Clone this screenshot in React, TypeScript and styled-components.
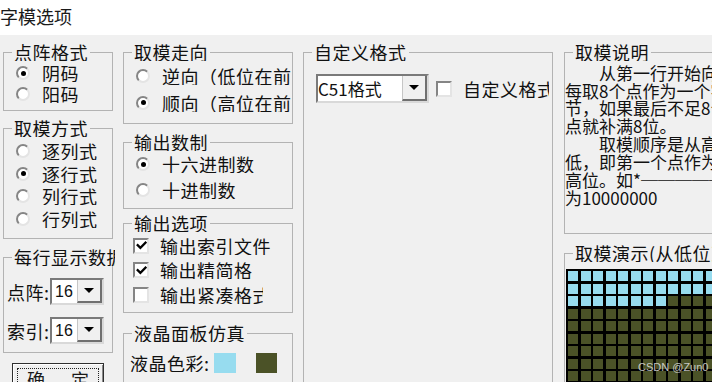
import React from "react";
import styled, { createGlobalStyle } from "styled-components";

const CJK = `"Noto Sans CJK SC", "Noto Sans", sans-serif`;
const LATIN = `"Liberation Sans", Arial, sans-serif`;

const GlobalStyle = createGlobalStyle`
  html, body { margin: 0; padding: 0; background: #ffffff; overflow: hidden; }
  body { font-family: ${CJK}; color: #111111; }
`;

const Window = styled.div`
  position: relative;
  width: 712px;
  height: 382px;
  display: flex;
  flex-direction: column;
  overflow: hidden;
`;

const TitleBar = styled.div`
  flex: none;
  height: 35px;
  box-sizing: border-box;
  padding-top: 7px;
  background: #ffffff;
  font-size: 18px;
  line-height: 18px;
  color: #1a1a1a;
  white-space: nowrap;
`;

const DialogBody = styled.div`
  flex: 1;
  min-height: 0;
  display: flex;
  align-items: flex-start;
  padding-left: 3px;
  background: #f0f0f0;
`;

const Column = styled.div<{ $w: number; $ml?: number }>`
  flex: none;
  width: ${(p) => p.$w}px;
  margin-left: ${(p) => p.$ml ?? 0}px;
  display: flex;
  flex-direction: column;
`;

const Group = styled.div<{ $mt: number; $h: number }>`
  flex: none;
  box-sizing: border-box;
  height: ${(p) => p.$h}px;
  margin-top: ${(p) => p.$mt}px;
  border: 1px solid #b3b3b3;
  display: flex;
  flex-direction: column;
`;

const Legend = styled.div<{ $maxW?: number }>`
  align-self: flex-start;
  box-sizing: border-box;
  height: 18px;
  margin: -10px 0 0 8px;
  padding: 0 2px;
  background: #f0f0f0;
  font-size: 18px;
  line-height: 18px;
  letter-spacing: 0.5px;
  color: #111111;
  white-space: nowrap;
  overflow: hidden;
  ${(p) => (p.$maxW ? `max-width: ${p.$maxW}px;` : "")}
`;

const OptionList = styled.div<{ $pt: number; $pl: number; $gap: number }>`
  display: flex;
  flex-direction: column;
  padding: ${(p) => p.$pt}px 0 0 ${(p) => p.$pl}px;
  gap: ${(p) => p.$gap}px;
`;

const OptionRow = styled.div`
  display: flex;
  align-items: center;
  height: 18px;
  white-space: nowrap;
`;

const OptionText = styled.span<{ $maxW?: number }>`
  display: block;
  font-size: 18px;
  line-height: 18px;
  letter-spacing: 0.5px;
  color: #111111;
  white-space: nowrap;
  overflow: hidden;
  ${(p) => (p.$maxW ? `max-width: ${p.$maxW}px;` : "")}
`;

const Radio = styled.span<{ $checked: boolean }>`
  flex: none;
  box-sizing: border-box;
  width: 14px;
  height: 14px;
  margin-right: 12px;
  border-radius: 50%;
  border: 2px solid;
  border-color: #858585 #e4e4e4 #e4e4e4 #858585;
  background: #ffffff;
  display: flex;
  align-items: center;
  justify-content: center;
  &::after {
    content: "";
    width: 5px;
    height: 5px;
    border-radius: 50%;
    background: #000000;
    display: ${(p) => (p.$checked ? "block" : "none")};
  }
`;

const CheckBox = styled.span<{ $mr: number }>`
  flex: none;
  box-sizing: border-box;
  width: 16px;
  height: 16px;
  margin-right: ${(p) => p.$mr}px;
  border: 2px solid;
  border-color: #858585 #e4e4e4 #e4e4e4 #858585;
  background: #ffffff;
  display: flex;
  align-items: center;
  justify-content: center;
`;

const Combo = styled.div<{ $w: number; $h: number }>`
  flex: none;
  box-sizing: border-box;
  display: flex;
  width: ${(p) => p.$w}px;
  height: ${(p) => p.$h}px;
  border: 2px solid;
  border-color: #7a7a7a #d9d9d9 #d9d9d9 #7a7a7a;
  background: #ffffff;
`;

const ComboValue = styled.span<{ $latin?: boolean; $pl: number }>`
  flex: 1;
  min-width: 0;
  display: flex;
  align-items: center;
  padding-left: ${(p) => p.$pl}px;
  font-family: ${(p) => (p.$latin ? LATIN : CJK)};
  font-size: ${(p) => (p.$latin ? 16 : 17)}px;
  color: #111111;
  white-space: nowrap;
  overflow: hidden;
`;

const ComboButton = styled.span`
  flex: none;
  width: 25px;
  box-sizing: border-box;
  background: #f0f0f0;
  border-left: 1px solid #c6c6c6;
  border-right: 2px solid #707070;
  border-bottom: 2px solid #707070;
  display: flex;
  align-items: center;
  justify-content: center;
  &::after {
    content: "";
    width: 0;
    height: 0;
    border-left: 5px solid transparent;
    border-right: 5px solid transparent;
    border-top: 5px solid #000000;
  }
`;

const FieldList = styled.div`
  display: flex;
  flex-direction: column;
  gap: 12px;
  padding: 12px 0 0 3px;
`;

const FieldRow = styled.div`
  display: flex;
  align-items: center;
`;

const FieldLabel = styled.span`
  flex: none;
  width: 43px;
  font-size: 18px;
  line-height: 18px;
  letter-spacing: 0.5px;
  white-space: nowrap;
`;

const FormatRow = styled.div`
  display: flex;
  align-items: center;
  padding: 13px 0 0 12px;
`;

const FormatCheck = styled.div`
  display: flex;
  align-items: center;
  margin-left: 7px;
`;

const SwatchRow = styled.div`
  display: flex;
  align-items: center;
  height: 20px;
  padding: 11px 0 0 6px;
`;

const Swatch = styled.span<{ $color: string; $w: number; $ml: number }>`
  flex: none;
  width: ${(p) => p.$w}px;
  height: 20px;
  margin-left: ${(p) => p.$ml}px;
  background: ${(p) => p.$color};
`;

const NoteText = styled.div`
  padding-top: 2.6px;
  font-size: 17px;
  line-height: 17.9px;
  color: #111111;
  white-space: pre;
  overflow: hidden;
`;

const DemoGrid = styled.div`
  align-self: flex-start;
  display: grid;
  grid-template-columns: repeat(16, 10px);
  grid-auto-rows: 10px;
  gap: 2.5px;
  padding: 2px;
  margin: 7px 0 0 1px;
  background: #000000;
`;

const Pixel = styled.span<{ $on: boolean }>`
  background: ${(p) => (p.$on ? "#97dcef" : "#4b5227")};
`;

const PushButton = styled.div`
  flex: none;
  box-sizing: border-box;
  width: 92px;
  height: 34px;
  margin: 10px 0 0 9px;
  padding: 4px;
  border: 1px solid #2e2e2e;
  box-shadow: inset 1px 1px 0 #ffffff, inset -1px -1px 0 #8a8a8a;
  background: #f0f0f0;
  display: flex;
`;

const FocusRect = styled.div`
  flex: 1;
  display: flex;
  justify-content: center;
  gap: 26px;
  padding-top: 1px;
  border: 1px dotted #222222;
  font-size: 18px;
  line-height: 18px;
  color: #1a1a1a;
`;

const Watermark = styled.div`
  position: absolute;
  left: 638px;
  top: 360px;
  font-family: ${LATIN};
  font-size: 11px;
  line-height: 14px;
  color: rgba(225, 225, 225, 0.85);
  white-space: nowrap;
`;

const CheckMark = () => (
  <svg width="11" height="11" viewBox="0 0 12 12" aria-hidden="true">
    <path d="M1.8 5.6 L4.8 8.6 L10.4 2.8" fill="none" stroke="#000" strokeWidth="2.4" strokeLinecap="square" />
  </svg>
);

type Opt = { label: string; checked: boolean; maxW?: number };

const RadioGroup = ({ items, pt, gap }: { items: Opt[]; pt: number; gap: number }) => (
  <OptionList $pt={pt} $pl={12} $gap={gap}>
    {items.map((o) => (
      <OptionRow key={o.label}>
        <Radio $checked={o.checked} />
        <OptionText $maxW={o.maxW}>{o.label}</OptionText>
      </OptionRow>
    ))}
  </OptionList>
);

const Select = ({ value, w, h, latin, pl }: { value: string; w: number; h: number; latin?: boolean; pl: number }) => (
  <Combo $w={w} $h={h}>
    <ComboValue $latin={latin} $pl={pl}>{value}</ComboValue>
    <ComboButton />
  </Combo>
);

const noteLines = [
  "\u3000\u3000从第一行开始向右",
  "每取8个点作为一个字",
  "节，如果最后不足8个",
  "点就补满8位。",
  "\u3000\u3000取模顺序是从高到",
  "低，即第一个点作为最",
  "高位。如*──────取",
  "为10000000",
];

const pixels = Array.from({ length: 16 * 16 }, (_, i) => i < 40);

export default function App() {
  return (
    <>
      <GlobalStyle />
      <Window>
        <TitleBar>字模选项</TitleBar>
        <DialogBody>
          <Column $w={110}>
            <Group $mt={17} $h={59}>
              <Legend>点阵格式</Legend>
              <RadioGroup
                pt={3}
                gap={3}
                items={[
                  { label: "阴码", checked: true },
                  { label: "阳码", checked: false },
                ]}
              />
            </Group>
            <Group $mt={17} $h={111}>
              <Legend>取模方式</Legend>
              <RadioGroup
                pt={5}
                gap={4.5}
                items={[
                  { label: "逐列式", checked: false },
                  { label: "逐行式", checked: true },
                  { label: "列行式", checked: false },
                  { label: "行列式", checked: false },
                ]}
              />
            </Group>
            <Group $mt={18} $h={96}>
              <Legend $maxW={103}>每行显示数据</Legend>
              <FieldList>
                <FieldRow>
                  <FieldLabel>点阵:</FieldLabel>
                  <Select value="16" w={54} h={27} latin pl={3} />
                </FieldRow>
                <FieldRow>
                  <FieldLabel>索引:</FieldLabel>
                  <Select value="16" w={54} h={27} latin pl={3} />
                </FieldRow>
              </FieldList>
            </Group>
            <PushButton>
              <FocusRect>
                <span>确</span>
                <span>定</span>
              </FocusRect>
            </PushButton>
          </Column>

          <Column $w={170} $ml={10}>
            <Group $mt={17} $h={72}>
              <Legend>取模走向</Legend>
              <RadioGroup
                pt={5.5}
                gap={9}
                items={[
                  { label: "逆向（低位在前）", checked: false, maxW: 129 },
                  { label: "顺向（高位在前）", checked: true, maxW: 129 },
                ]}
              />
            </Group>
            <Group $mt={18} $h={67}>
              <Legend>输出数制</Legend>
              <RadioGroup
                pt={4}
                gap={8}
                items={[
                  { label: "十六进制数", checked: true },
                  { label: "十进制数", checked: false },
                ]}
              />
            </Group>
            <Group $mt={14} $h={90}>
              <Legend>输出选项</Legend>
              <OptionList $pt={4.5} $pl={9} $gap={6.5}>
                {[
                  { label: "输出索引文件", checked: true },
                  { label: "输出精简格式", checked: true, maxW: 93 },
                  { label: "输出紧凑格式", checked: false, maxW: 103 },
                ].map((o) => (
                  <OptionRow key={o.label}>
                    <CheckBox $mr={11}>{o.checked && <CheckMark />}</CheckBox>
                    <OptionText $maxW={o.maxW}>{o.label}</OptionText>
                  </OptionRow>
                ))}
              </OptionList>
            </Group>
            <Group $mt={20} $h={80}>
              <Legend>液晶面板仿真</Legend>
              <SwatchRow>
                <OptionText>液晶色彩:</OptionText>
                <Swatch $color="#97dcef" $w={22} $ml={4} />
                <Swatch $color="#4b5227" $w={21} $ml={20} />
              </SwatchRow>
            </Group>
          </Column>

          <Column $w={250} $ml={10}>
            <Group $mt={17} $h={400}>
              <Legend>自定义格式</Legend>
              <FormatRow>
                <Select value="C51格式" w={113} h={29} pl={0} />
                <FormatCheck>
                  <CheckBox $mr={11} />
                  <OptionText $maxW={86}>自定义格式</OptionText>
                </FormatCheck>
              </FormatRow>
            </Group>
          </Column>

          <Column $w={175} $ml={11}>
            <Group $mt={17} $h={182}>
              <Legend>取模说明</Legend>
              <NoteText>{noteLines.join("\n")}</NoteText>
            </Group>
            <Group $mt={19} $h={220}>
              <Legend>取模演示(从低位到高位)</Legend>
              <DemoGrid>
                {pixels.map((on, i) => (
                  <Pixel key={i} $on={on} />
                ))}
              </DemoGrid>
            </Group>
          </Column>
        </DialogBody>
        <Watermark>CSDN @Zun0</Watermark>
      </Window>
    </>
  );
}
